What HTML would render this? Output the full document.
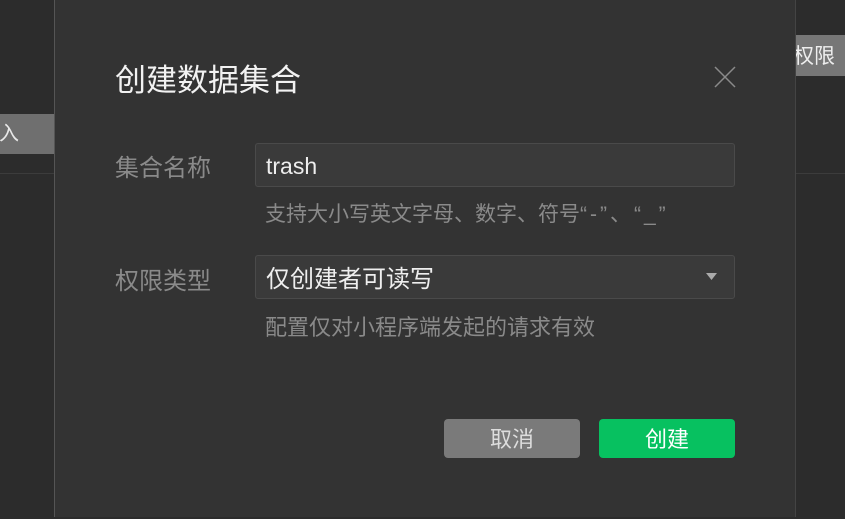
<!DOCTYPE html>
<html><head><meta charset="utf-8"><style>
*{margin:0;padding:0;box-sizing:border-box}
body{width:845px;height:519px;background:#2c2c2c;position:relative;overflow:hidden;font-family:"Liberation Sans","Noto Sans CJK SC",sans-serif}
.a{position:absolute;white-space:nowrap}
</style></head><body>
<div class="a" style="left:0;top:173px;width:55px;height:1px;background:#3c3c3c"></div>
<div class="a" style="left:795px;top:173px;width:50px;height:1px;background:#3c3c3c"></div>
<div class="a" style="left:0;top:114px;width:54px;height:40px;background:#6f6f6f;color:#e8e8e8;font-size:20px;line-height:40px;overflow:hidden"><span style="margin-left:-21px">导入</span></div>
<div class="a" style="left:795px;top:35px;width:50px;height:41px;background:#777;color:#eee;font-size:21px;line-height:43px;overflow:hidden"><span style="margin-left:-2px">权限</span></div>
<div class="a" style="left:54px;top:0;width:742px;height:517px;background:#333;border-left:1px solid #555;border-right:1px solid #444"></div>
<div class="a" style="left:115px;top:59px;color:#f2f2f2;font-size:31px;line-height:44px">创建数据集合</div>
<svg class="a" style="left:714px;top:66px" width="22" height="22"><path d="M1 1L21 21M21 1L1 21" stroke="#8a8a8a" stroke-width="1.5"/></svg>
<div class="a" style="left:115px;top:152px;color:#8a8a8a;font-size:24px;line-height:34px">集合名称</div>
<div class="a" style="left:255px;top:143px;width:480px;height:44px;background:#3a3a3a;border:1px solid #4a4a4a;border-radius:3px;color:#eee;font-size:23px;line-height:44px;padding-left:10px">trash</div>
<div class="a" style="left:265px;top:200px;color:#8a8a8a;font-size:21px;line-height:30px">支持大小写英文字母、数字、符号<span style="letter-spacing:3px">“-”、“_”</span></div>
<div class="a" style="left:115px;top:265px;color:#8a8a8a;font-size:24px;line-height:34px">权限类型</div>
<div class="a" style="left:255px;top:255px;width:480px;height:44px;background:#3a3a3a;border:1px solid #4a4a4a;border-radius:3px;color:#eee;font-size:24px;line-height:48px;padding-left:10px">仅创建者可读写</div>
<svg class="a" style="left:706px;top:273px" width="11" height="8"><path d="M0 0H11L5.5 7Z" fill="#aaa"/></svg>
<div class="a" style="left:265px;top:312px;color:#8a8a8a;font-size:22px;line-height:32px">配置仅对小程序端发起的请求有效</div>
<div class="a" style="left:444px;top:419px;width:136px;height:39px;background:#7a7a7a;border-radius:4px;color:#ddd;font-size:22px;line-height:41px;text-align:center">取消</div>
<div class="a" style="left:599px;top:419px;width:136px;height:39px;background:#07c160;border-radius:4px;color:#fff;font-size:22px;line-height:41px;text-align:center">创建</div>
</body></html>
